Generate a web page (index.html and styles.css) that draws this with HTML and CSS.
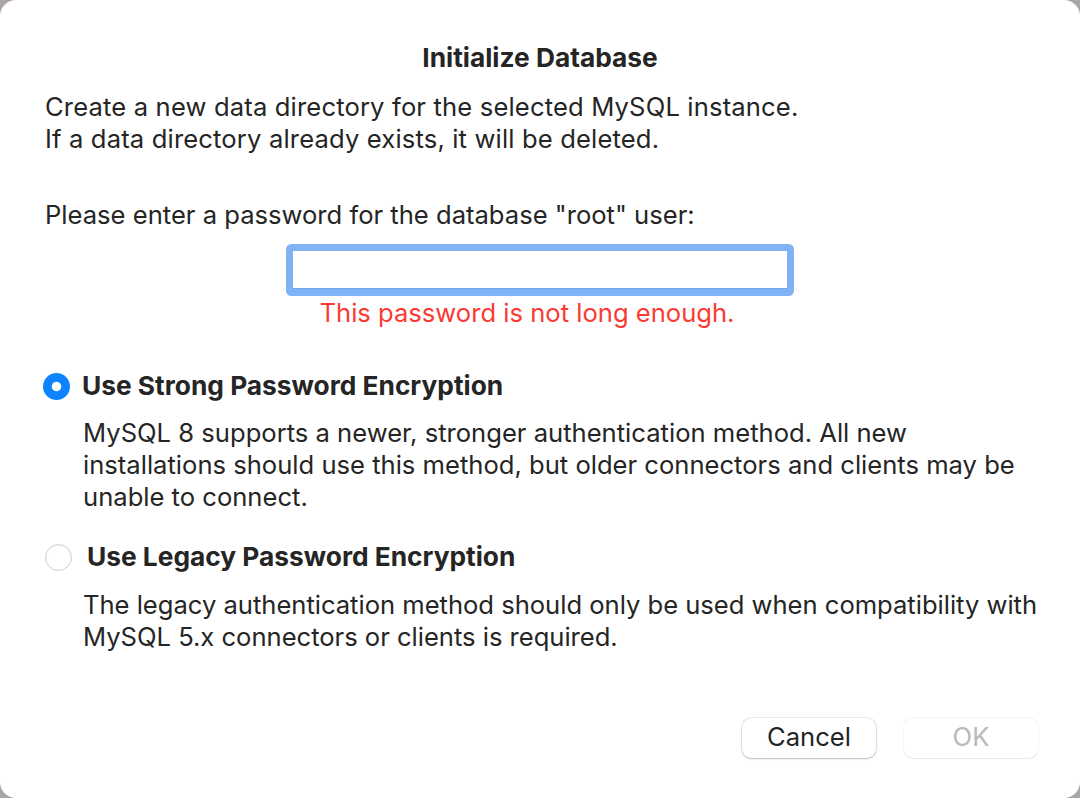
FILE: index.html
```html
<!DOCTYPE html>
<html>
<head>
<meta charset="utf-8">
<link rel="stylesheet" href="styles.css">
</head>
<body>
<div class="dialog">
  <h1 class="title">Initialize Database</h1>
  <p class="intro">Create a new data directory for the selected MySQL instance.<br>If a data directory already exists, it will be deleted.</p>
  <p class="prompt">Please enter a password for the database "root" user:</p>
  <div class="field-wrap">
    <input class="field" type="password">
    <div class="error">This password is not long enough.</div>
  </div>
  <div class="option option-strong">
    <span class="radio radio-on"></span>
    <span class="option-label">Use Strong Password Encryption</span>
  </div>
  <p class="desc desc-strong">MySQL 8 supports a newer, stronger authentication method. All new<br>installations should use this method, but older connectors and clients may be<br>unable to connect.</p>
  <div class="option option-legacy">
    <span class="radio radio-off"></span>
    <span class="option-label">Use Legacy Password Encryption</span>
  </div>
  <p class="desc desc-legacy">The legacy authentication method should only be used when compatibility with<br>MySQL 5.x connectors or clients is required.</p>
  <div class="buttons">
    <button class="btn">Cancel</button>
    <button class="btn btn-disabled">OK</button>
  </div>
</div>
</body>
</html>
```
FILE: styles.css
```css
* { box-sizing: border-box; }
html, body { margin: 0; padding: 0; }
body {
  width: 1080px;
  height: 798px;
  background: #aca7a5;
  font-family: Inter, "Open Sans", sans-serif;
  color: #252525;
  overflow: hidden;
}
.dialog {
  width: 1080px;
  height: 798px;
  background: #ffffff;
  border-radius: 16px;
  padding: 42px 0 0 45px;
  display: flex;
  flex-direction: column;
}
.title {
  margin: 0 0 0 -45px;
  font-size: 26.3px;
  font-weight: 700;
  text-align: center;
  line-height: 32px;
}
.intro {
  margin: 17px 0 0;
  font-size: 25.6px;
  letter-spacing: 0.15px;
  line-height: 32px;
  white-space: nowrap;
}
.prompt {
  margin: 44px 0 0;
  font-size: 25.6px;
  line-height: 32px;
}
.field-wrap {
  display: flex;
  flex-direction: column;
  align-items: center;
  width: 1080px;
  margin: 17px 0 0 -45px;
}
.field {
  width: 500px;
  height: 44px;
  border: 3px solid #7fb3f5;
  border-radius: 2px;
  box-shadow: 0 0 0 4px #7fb3f5, inset 0 -1px 0 #6ea6ef;
  outline: none;
  background: #fff;
  margin: 0;
  padding: 0;
}
.error {
  color: #fa3b33;
  font-size: 25.6px;
  line-height: 32px;
  margin: 5px 0 0 -26px;
}
.option {
  display: flex;
  align-items: center;
  font-size: 26.3px;
  font-weight: 700;
  line-height: 32px;
}
.option-strong { margin: 41px 0 0 -2px; }
.option-strong .radio { margin-right: 12px; }
.option-legacy { margin: 28px 0 0 0; }
.option-legacy .radio { margin-right: 15px; }
.radio {
  width: 27px;
  height: 27px;
  border-radius: 50%;
  flex: none;
}
.radio-on {
  background: radial-gradient(circle, #fff 0 4.2px, #0d84fe 5.2px);
}
.radio-off {
  background: #fff;
  border: 1px solid #cfcfcf;
  box-shadow: inset 0 1px 1px rgba(0,0,0,0.05);
}
.desc {
  margin: 15px 0 0 38px;
  font-size: 25.6px;
  line-height: 32px;
  white-space: nowrap;
}
.desc-legacy {
  margin-top: 16px;
  letter-spacing: -0.02px;
}
.buttons {
  margin-top: auto;
  margin-bottom: 40px;
  display: flex;
  justify-content: flex-end;
  gap: 28px;
  padding-right: 42px;
}
.btn {
  width: 134px;
  height: 40px;
  border-radius: 9px;
  border: none;
  background: #fff;
  font-family: Inter, "Open Sans", sans-serif;
  font-size: 25.6px;
  line-height: 32px;
  color: #252525;
  box-shadow: 0 0 0 0.5px rgba(0,0,0,0.16), 0 1px 2px rgba(0,0,0,0.2);
  padding: 0 0 3px;
}
.btn-disabled {
  color: #b9b9b9;
  box-shadow: 0 0 0 0.5px rgba(0,0,0,0.08), 0 1px 1px rgba(0,0,0,0.05);
}
```
